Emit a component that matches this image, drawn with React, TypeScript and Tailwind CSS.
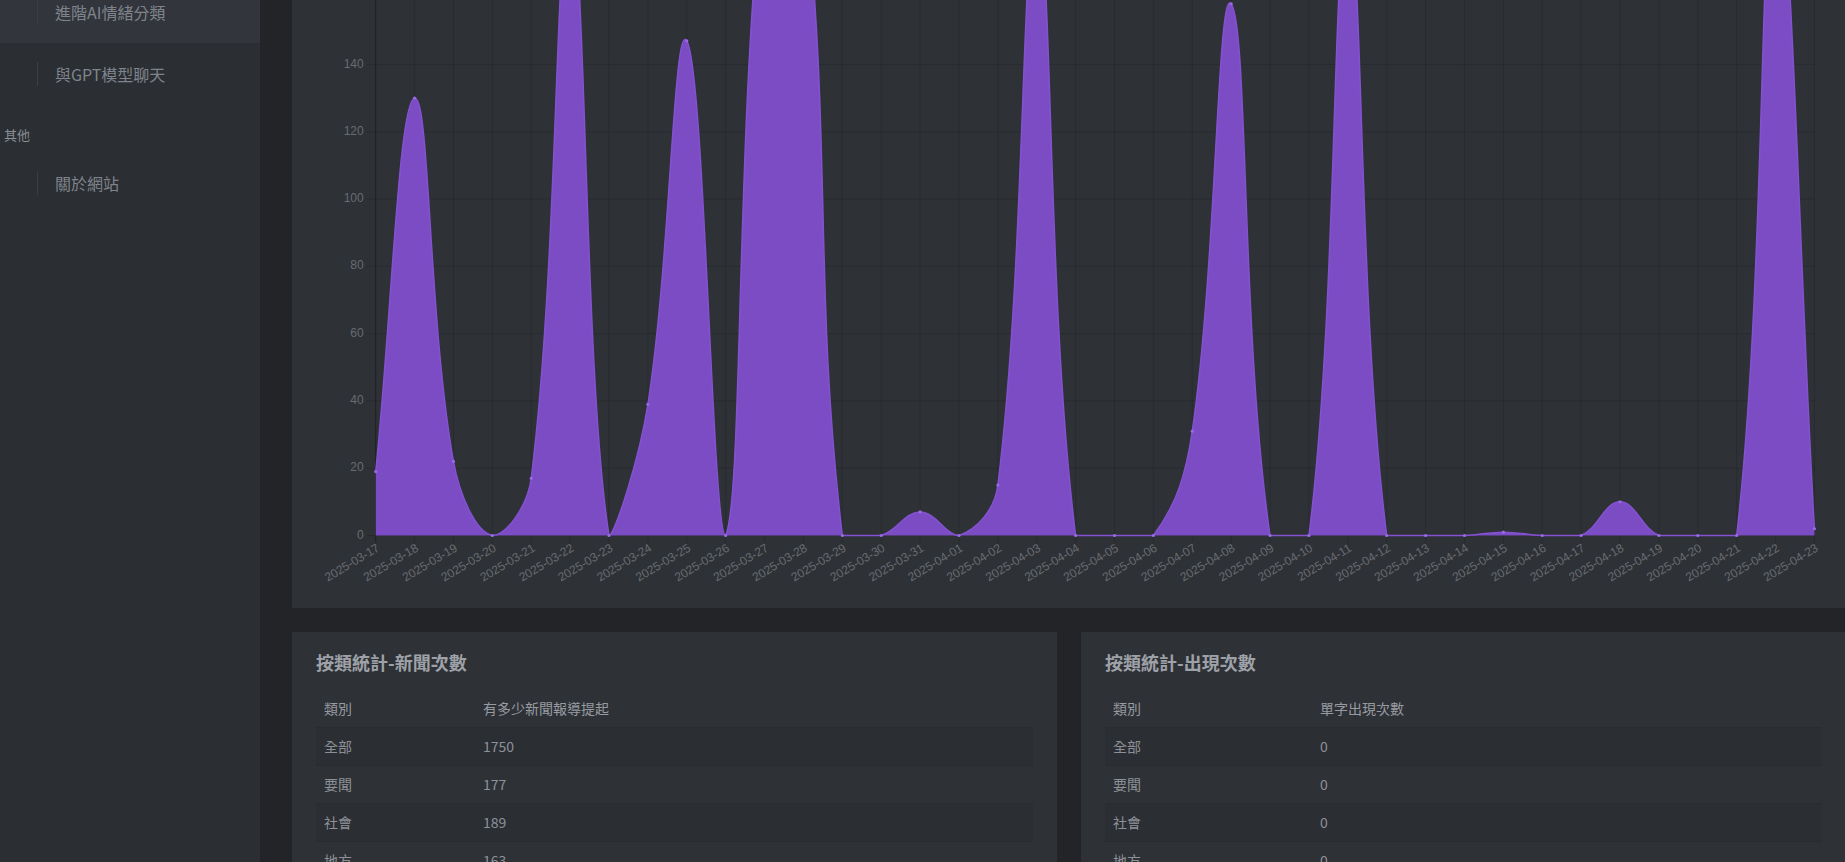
import React from "react"

const values = [
  19, 130, 22, 0, 17, 184, 0, 39, 147, 0, 198, 195, 0, 0, 7, 0, 15, 183, 0, 0, 0, 31, 158, 0, 0, 182, 0, 0, 0, 1, 0,
  0, 10, 0, 0, 0, 199, 2,
]

const labels = [
  ...Array.from({ length: 15 }, (_, i) => `2025-03-${String(17 + i).padStart(2, "0")}`),
  ...Array.from({ length: 23 }, (_, i) => `2025-04-${String(i + 1).padStart(2, "0")}`),
]

// chart geometry, in px relative to the chart card
const X0 = 83.7
const DX = 38.885
const Y0 = 535.5
const K = 3.365
const MAX = 200
const TOP = Y0 - MAX * K
const RIGHT = X0 + (values.length - 1) * DX

type Pt = { x: number; y: number }

function spline(first: Pt, mid: Pt, after: Pt, t: number) {
  const d01 = Math.hypot(mid.x - first.x, mid.y - first.y)
  const d12 = Math.hypot(after.x - mid.x, after.y - mid.y)
  let s01 = d01 / (d01 + d12)
  let s12 = d12 / (d01 + d12)
  if (isNaN(s01)) s01 = 0
  if (isNaN(s12)) s12 = 0
  const fa = t * s01
  const fb = t * s12
  return {
    prev: { x: mid.x - fa * (after.x - first.x), y: mid.y - fa * (after.y - first.y) },
    next: { x: mid.x + fb * (after.x - first.x), y: mid.y + fb * (after.y - first.y) },
  }
}

const cap = (p: Pt) => ({
  x: Math.min(Math.max(p.x, X0), RIGHT),
  y: Math.min(Math.max(p.y, TOP), Y0),
})

function buildPath() {
  const pts = values.map((v, i) => ({ x: X0 + i * DX, y: Y0 - v * K }))
  const cps = pts.map((p, i) => {
    const c = spline(pts[Math.max(0, i - 1)], p, pts[Math.min(pts.length - 1, i + 1)], 0.4)
    return { prev: cap(c.prev), next: cap(c.next) }
  })
  let d = `M${pts[0].x},${pts[0].y}`
  for (let i = 0; i < pts.length - 1; i++) {
    const a = cps[i].next
    const b = cps[i + 1].prev
    const p = pts[i + 1]
    d += ` C${a.x},${a.y} ${b.x},${b.y} ${p.x},${p.y}`
  }
  return { d, pts }
}

function TrendChart() {
  const { d, pts } = buildPath()
  const gridTicks = [0, 20, 40, 60, 80, 100, 120, 140, 160, 180, 200]
  const yLabels = [0, 20, 40, 60, 80, 100, 120, 140, 160]
  return (
    <svg width="1554" height="608" className="block" style={{ fontFamily: '"Liberation Sans", Arial, sans-serif' }}>
      {gridTicks.map((v) => (
        <line
          key={"h" + v}
          x1={X0 - 9}
          x2={RIGHT}
          y1={Y0 - v * K}
          y2={Y0 - v * K}
          stroke="rgba(0,0,0,0.13)"
          strokeWidth="1"
        />
      ))}
      {labels.map((_, i) => (
        <line
          key={"v" + i}
          x1={X0 + i * DX}
          x2={X0 + i * DX}
          y1={TOP}
          y2={Y0 + 9}
          stroke={i === 0 ? "rgba(0,0,0,0.35)" : "rgba(0,0,0,0.13)"}
          strokeWidth="1"
        />
      ))}
      <path d={`${d} L${RIGHT},${Y0} L${X0},${Y0} Z`} fill="#7b4cc4" />
      <path d={d} fill="none" stroke="#8452d0" strokeWidth="1.5" />
      {pts.map((p, i) => (
        <circle key={"p" + i} cx={p.x} cy={p.y} r="1.6" fill="#9a6ae6" />
      ))}
      {yLabels.map((v) => (
        <text
          key={"t" + v}
          x={X0 - 12}
          y={Y0 - v * K}
          textAnchor="end"
          dominantBaseline="middle"
          fontSize="12"
          fill="#696c71"
        >
          {v}
        </text>
      ))}
      {labels.map((l, i) => (
        <text
          key={"l" + i}
          transform={`translate(${X0 + i * DX + 3},${Y0 + 12}) rotate(-31)`}
          textAnchor="end"
          dominantBaseline="middle"
          fontSize="12"
          fill="#696c71"
        >
          {l}
        </text>
      ))}
    </svg>
  )
}

function NavItem({ label, active }: { label: string; active?: boolean }) {
  return (
    <div className={`flex h-[62px] items-center pl-[37px] ${active ? "bg-[#32353b]" : ""}`}>
      <span className="h-6 w-px bg-[#3b3e44]" />
      <span className="ml-[17px] text-[16px] text-[#7f848c]">{label}</span>
    </div>
  )
}

const rows = ["全部", "要聞", "社會", "地方"]

function StatCard({
  title,
  col1,
  col2,
  data,
  firstWidth,
}: {
  title: string
  col1: string
  col2: string
  data: string[]
  firstWidth: string
}) {
  return (
    <div className="bg-[#2e3136] px-6 pt-5 pb-6">
      <h5 className="text-[18px] leading-[21px] font-bold text-[#9ea2a8]">{title}</h5>
      <table className="mt-[17px] w-full border-collapse text-[14px] leading-[21px] text-[#8d9197]">
        <thead>
          <tr className="border-b border-[#282b2f]">
            <th className={`${firstWidth} px-2 py-2 text-left font-normal text-[#979ba1]`}>{col1}</th>
            <th className="px-2 py-2 text-left font-normal text-[#979ba1]">{col2}</th>
          </tr>
        </thead>
        <tbody>
          {rows.map((r, i) => (
            <tr key={r} className={`border-b border-[#282b2f] ${i % 2 === 0 ? "bg-[#2b2e33]" : ""}`}>
              <td className="px-2 py-2">{r}</td>
              <td className="px-2 py-2">{data[i]}</td>
            </tr>
          ))}
        </tbody>
      </table>
    </div>
  )
}

export default function App() {
  return (
    <div
      className="flex h-[862px] w-full overflow-hidden bg-[#222428]"
      style={{ fontFamily: '"Noto Sans CJK TC", "Noto Sans", sans-serif' }}
    >
      <aside className="w-[260px] shrink-0 overflow-hidden bg-[#2b2e33]">
        <div className="-mt-[19px]">
          <NavItem label="進階AI情緒分類" active />
          <NavItem label="與GPT模型聊天" />
          <div className="h-[47px] pt-[21px] pl-1 text-[13px] leading-[18px] text-[#8a8e95]">其他</div>
          <NavItem label="關於網站" />
        </div>
      </aside>
      <main className="min-w-0 flex-1 overflow-hidden pl-8">
        <div className="h-[608px] w-[1554px] overflow-hidden bg-[#2e3136]">
          <TrendChart />
        </div>
        <div className="mt-6 grid w-[1554px] grid-cols-[765px_765px] gap-6">
          <StatCard
            title="按類統計-新聞次數"
            col1="類別"
            col2="有多少新聞報導提起"
            data={["1750", "177", "189", "163"]}
            firstWidth="w-[159px]"
          />
          <StatCard
            title="按類統計-出現次數"
            col1="類別"
            col2="單字出現次數"
            data={["0", "0", "0", "0"]}
            firstWidth="w-[207px]"
          />
        </div>
      </main>
    </div>
  )
}
